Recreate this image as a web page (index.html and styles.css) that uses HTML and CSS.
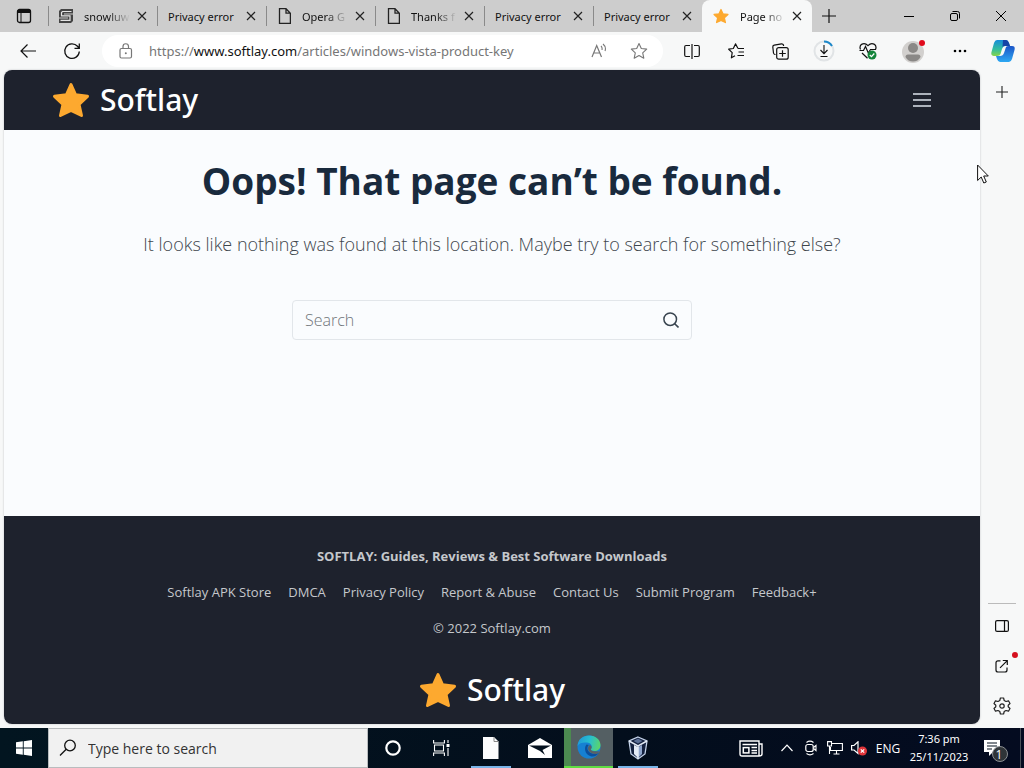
FILE: index.html
```html
<!DOCTYPE html>
<html lang="en">
<head>
    <meta charset="UTF-8">
    <meta name="viewport" content="width=device-width, initial-scale=1.0">
    <title>Page not found - Softlay</title>
    <link rel="stylesheet" href="styles.css">
</head>
<body>
    <svg class="defs" aria-hidden="true">
        <symbol id="star" viewBox="0 0 38 36">
            <path d="M19 2.500L23.600 12.800L35.500 14.300L27 22.300L29.500 33.500L19 28.300L8.500 33.500L11 22.300L2.500 14.300L14.400 12.800Z" fill="#fda92f" stroke="#fda92f" stroke-width="3" stroke-linejoin="round"/>
        </symbol>
        <symbol id="close" viewBox="0 0 10 10">
            <path d="M1 1L9 9M9 1L1 9" fill="none" stroke="#222" stroke-width="1.200"/>
        </symbol>
        <symbol id="file" viewBox="0 0 14 16">
            <path d="M2.500 .7H9L13.400 5.200V15.300H2.500ZM9 .7V5.200H13.400" fill="none" stroke="#222" stroke-width="1.300"/>
        </symbol>
    </svg>

    <div class="tabs">
        <button class="tab-menu" aria-label="Tab actions">
            <svg width="16" height="16" viewBox="0 0 16 16"><rect x="1.500" y="1.500" width="13" height="13" rx="2" fill="none" stroke="#111" stroke-width="1.300"/><path d="M1.500 2H14.500V5H1.500Z" fill="#111"/><path d="M5 5V14" stroke="#111"/></svg>
        </button>
        <div class="tab">
            <svg width="14" height="14" viewBox="0 0 14 14"><path d="M2 0H14V4.500H5V5.500H14V12L12 14H0V9.500H9V8.500H0V2Z" fill="#444"/><path d="M12.500 2.500H3.500L2.500 3.500V6.800H11V11.300H1.500" fill="none" stroke="#e4e4e4" stroke-width="1.200"/></svg>
            <span class="tab-title">snowluw</span>
            <button class="tab-close" aria-label="Close tab"><svg width="10" height="10"><use href="#close"/></svg></button>
        </div>
        <div class="tab">
            <span class="tab-title full">Privacy error</span>
            <button class="tab-close" aria-label="Close tab"><svg width="10" height="10"><use href="#close"/></svg></button>
        </div>
        <div class="tab">
            <svg width="14" height="16"><use href="#file"/></svg>
            <span class="tab-title">Opera G</span>
            <button class="tab-close" aria-label="Close tab"><svg width="10" height="10"><use href="#close"/></svg></button>
        </div>
        <div class="tab">
            <svg width="14" height="16"><use href="#file"/></svg>
            <span class="tab-title">Thanks f</span>
            <button class="tab-close" aria-label="Close tab"><svg width="10" height="10"><use href="#close"/></svg></button>
        </div>
        <div class="tab">
            <span class="tab-title full">Privacy error</span>
            <button class="tab-close" aria-label="Close tab"><svg width="10" height="10"><use href="#close"/></svg></button>
        </div>
        <div class="tab">
            <span class="tab-title full">Privacy error</span>
            <button class="tab-close" aria-label="Close tab"><svg width="10" height="10"><use href="#close"/></svg></button>
        </div>
        <div class="tab active">
            <svg width="16" height="16"><use href="#star"/></svg>
            <span class="tab-title">Page no</span>
            <button class="tab-close" aria-label="Close tab"><svg width="10" height="10"><use href="#close"/></svg></button>
        </div>
        <button class="new-tab" aria-label="New tab">
            <svg width="14" height="14" viewBox="0 0 14 14"><path d="M7 0V14M0 7H14" stroke="#111" stroke-width="1.200"/></svg>
        </button>
        <div class="window-buttons">
            <button aria-label="Minimize"><svg width="10" height="10" viewBox="0 0 10 10"><path d="M0 5.500H10" stroke="#000"/></svg></button>
            <button aria-label="Restore"><svg width="10" height="10" viewBox="0 0 10 10"><path d="M2.500 .5H7.500Q9.500 .5 9.500 2.500V7.500" fill="none" stroke="#000"/><rect x=".5" y="2.500" width="7" height="7" rx="1.500" fill="none" stroke="#000"/></svg></button>
            <button aria-label="Close window"><svg width="10" height="10" viewBox="0 0 10 10"><path d="M0 0L10 10M10 0L0 10" stroke="#000"/></svg></button>
        </div>
    </div>

    <div class="toolbar">
        <button aria-label="Back">
            <svg width="16" height="14" viewBox="0 0 16 14"><path d="M16 7H1M7.500 .5L1 7L7.500 13.500" fill="none" stroke="#111" stroke-width="1.200"/></svg>
        </button>
        <button aria-label="Refresh">
            <svg width="18" height="18" viewBox="0 0 18 18"><path d="M16.300 9.500A7.300 7.300 0 1 1 14.500 4.300L16 6M16.300 1.500V6.300H11.500" fill="none" stroke="#111" stroke-width="1.300"/></svg>
        </button>
        <div class="address">
            <svg width="14" height="16" viewBox="0 0 14 16"><rect x="1" y="5.500" width="11.500" height="9.500" rx="1.500" fill="none" stroke="#777" stroke-width="1.200"/><path d="M4 5.500V3.500A2.700 2.700 0 0 1 9.500 3.500V5.500" fill="none" stroke="#777" stroke-width="1.200"/><circle cx="6.800" cy="10.300" r="1" fill="#777"/></svg>
            <div class="url">https://<b>www.softlay.com</b>/articles/windows-vista-product-key</div>
            <button aria-label="Read aloud">
                <svg width="16" height="16" viewBox="0 0 16 16"><path d="M1 14L5.700 2.500L10.500 14M2.700 10H8.800" fill="none" stroke="#777" stroke-width="1.200"/><path d="M10 3Q11.500 4.500 11 7M12 1Q15.500 4 14 8" fill="none" stroke="#777" stroke-width="1.100"/></svg>
            </button>
            <button aria-label="Add to favorites">
                <svg width="18" height="18" viewBox="0 0 18 18"><path d="M9 1.500L11.300 6.500L16.700 7.100L12.700 10.800L13.800 16.200L9 13.500L4.200 16.200L5.300 10.800L1.300 7.100L6.700 6.500Z" fill="none" stroke="#777" stroke-width="1.100" stroke-linejoin="round"/></svg>
            </button>
        </div>
        <div class="tools">
            <button aria-label="Split screen">
                <svg width="16" height="16" viewBox="0 0 16 16"><path d="M6 2.500H2Q.7 2.500 .7 4V12Q.7 13.500 2 13.500H6M10 2.500H14Q15.300 2.500 15.300 4V12Q15.300 13.500 14 13.500H10M8 1V16" fill="none" stroke="#111" stroke-width="1.200"/></svg>
            </button>
            <button aria-label="Favorites">
                <svg width="17" height="16" viewBox="0 0 17 16"><path d="M10 5.500L7.500 .9L5.300 5.500L.7 6.200L4.200 9.600L3.400 14.800L7 12.800M10 5.500H16M10.500 9H16M9.500 12.500H16" fill="none" stroke="#111" stroke-width="1.200" stroke-linejoin="round"/></svg>
            </button>
            <button aria-label="Collections">
                <svg width="17" height="17" viewBox="0 0 17 17"><path d="M3.500 11.500H3Q1.700 11.300 1.500 10L.8 4Q.7 2.500 2.200 2.200L9.500 .8Q11 .7 11.500 2V3" fill="none" stroke="#111" stroke-width="1.200"/><rect x="4.700" y="4.700" width="11.500" height="11.500" rx="2" fill="none" stroke="#111" stroke-width="1.200"/><path d="M10.500 7.200V13.700M7.200 10.500H13.800" stroke="#111" stroke-width="1.200"/></svg>
            </button>
            <button aria-label="Downloads">
                <svg width="22" height="22" viewBox="0 0 22 22"><circle cx="11" cy="11" r="9.500" fill="none" stroke="#e1e4e6" stroke-width="2"/><path d="M11 1.500A9.500 9.500 0 0 1 19 6" fill="none" stroke="#1b87c9" stroke-width="2"/><path d="M11 5V13.500M7.500 10L11 13.700L14.500 10M7.500 16.500H14.500" fill="none" stroke="#111" stroke-width="1.100"/></svg>
            </button>
            <button aria-label="Browser essentials">
                <svg width="18" height="18" viewBox="0 0 18 18"><path d="M1.500 7.500C-.5 2.500 5-.5 9 3.700C13-.5 18.500 2.500 16.500 7.500M.5 8.500H4.500L6.500 4.500L9.300 11L11.500 7.500H17M3 11L8.500 16.200" fill="none" stroke="#111" stroke-width="1.200"/><circle cx="13" cy="13" r="4.500" fill="#14853a"/><path d="M10.800 13L12.500 14.700L15.300 11.500" fill="none" stroke="#fff" stroke-width="1.200"/></svg>
            </button>
            <button class="profile" aria-label="Profile">
                <svg width="24" height="24" viewBox="0 0 24 24"><circle cx="11" cy="13" r="11" fill="#d2d0ce"/><circle cx="11" cy="9" r="5" fill="#8a8886"/><path d="M3.500 18Q3.500 15.500 6 15.500H16Q18.500 15.500 18.500 18Q16 22.500 11 22.500Q6 22.500 3.500 18Z" fill="#8a8886"/><circle cx="20" cy="4" r="3" fill="#e00b1c"/></svg>
            </button>
            <button aria-label="Settings and more">
                <svg width="14" height="4" viewBox="0 0 14 4"><circle cx="2" cy="2" r="1.300"/><circle cx="7" cy="2" r="1.300"/><circle cx="12" cy="2" r="1.300"/></svg>
            </button>
            <button class="copilot" aria-label="Copilot">
                <svg width="24" height="24" viewBox="0 0 24 24">
                    <defs>
                        <linearGradient id="cpa" x1="0" y1="0" x2="0" y2="1"><stop offset="0" stop-color="#168ddb"/><stop offset=".6" stop-color="#35bf9b"/><stop offset="1" stop-color="#86d44b"/></linearGradient>
                        <linearGradient id="cpb" x1="0" y1="0" x2="0" y2="1"><stop offset="0" stop-color="#1b55c8"/><stop offset="1" stop-color="#2da8f2"/></linearGradient>
                    </defs>
                    <path d="M6 1H15Q17 1 18 4L19 7H14Q12 7 11 10L9.500 15Q9 17 6 17H3Q-.5 17 .5 13L3 4Q4 1 6 1Z" fill="url(#cpa)"/>
                    <path d="M12 1H15Q17 1 18 4L19 7H14Q12 7 11.500 8Z" fill="#1645a7"/>
                    <path d="M18 23H9Q7 23 6 20L5 17H9Q12 17 13 14L15 8Q15.500 7 18 7H21Q24.500 7 23.500 11L21 20Q20 23 18 23Z" fill="url(#cpb)"/>
                </svg>
            </button>
        </div>
    </div>

    <div class="main">
        <div class="page">
            <header class="site-header">
                <a class="logo" href="#"><svg width="38" height="36"><use href="#star"/></svg>Softlay</a>
                <button class="menu" aria-label="Menu"><svg width="18" height="14" viewBox="0 0 18 14"><path d="M0 1H18M0 7H18M0 13H18" stroke="#dde3ec" stroke-width="1.700"/></svg></button>
            </header>
            <section class="not-found">
                <h1>Oops! That page can’t be found.</h1>
                <p>It looks like nothing was found at this location. Maybe try to search for something else?</p>
                <form class="search">
                    <input type="search" placeholder="Search" aria-label="Search">
                    <button type="button" aria-label="Search button"><svg width="16" height="16" viewBox="0 0 16 16"><circle cx="7.200" cy="7.200" r="6.300" fill="none" stroke="#38444f" stroke-width="1.500"/><path d="M11.700 11.700L15.500 15.500" stroke="#38444f" stroke-width="1.600"/></svg></button>
                </form>
            </section>
            <footer class="site-footer">
                <strong>SOFTLAY: Guides, Reviews &amp; Best Software Downloads</strong>
                <nav>
                    <a href="#">Softlay APK Store</a>
                    <a href="#">DMCA</a>
                    <a href="#">Privacy Policy</a>
                    <a href="#">Report &amp; Abuse</a>
                    <a href="#">Contact Us</a>
                    <a href="#">Submit Program</a>
                    <a href="#">Feedback+</a>
                </nav>
                <span>© 2022 Softlay.com</span>
                <a class="logo" href="#"><svg width="38" height="36"><use href="#star"/></svg>Softlay</a>
            </footer>
        </div>
        <aside class="sidebar">
            <button aria-label="Customize sidebar"><svg width="12" height="12" viewBox="0 0 12 12"><path d="M6 0V12M0 6H12" stroke="#222" stroke-width="1.100"/></svg></button>
            <div class="sidebar-bottom">
                <button aria-label="Hide sidebar"><svg width="14" height="12" viewBox="0 0 14 12"><rect x=".6" y=".6" width="12.800" height="10.800" rx="1.500" fill="none" stroke="#111" stroke-width="1.200"/><path d="M9.500 1V11" stroke="#111" stroke-width="1.200"/></svg></button>
                <button class="open-link" aria-label="Open link"><svg width="14" height="14" viewBox="0 0 14 14"><path d="M5.500 1.800H3Q1 1.800 1 3.800V11Q1 13 3 13H10Q12 13 12 11V8.500M5 8.800L12 1.800M7.800 1.500H12.300V6" fill="none" stroke="#111" stroke-width="1.200"/></svg><span class="dot"></span></button>
                <button aria-label="Settings"><svg width="18" height="18" viewBox="0 0 18 18"><path d="M7.400 1H10.600L11.200 3.500L13 4.500L15.500 3.800L17 6.500L15.200 8.200V9.800L17 11.500L15.500 14.200L13 13.500L11.200 14.500L10.600 17H7.400L6.800 14.500L5 13.500L2.500 14.200L1 11.500L2.800 9.800V8.200L1 6.500L2.500 3.800L5 4.500L6.800 3.500Z" fill="none" stroke="#222" stroke-width="1.200" stroke-linejoin="round"/><circle cx="9" cy="9" r="2.200" fill="none" stroke="#222" stroke-width="1.200"/></svg></button>
            </div>
        </aside>
    </div>

    <div class="taskbar">
        <button class="start" aria-label="Start"><svg width="16" height="16" viewBox="0 0 16 16"><path d="M0 2.200L6.800 1.300V7.500H0ZM7.700 1.200L16 0V7.500H7.700ZM0 8.400H6.800V14.700L0 13.800ZM7.700 8.400H16V16L7.700 14.800Z" fill="#fff"/></svg></button>
        <label class="task-search">
            <svg width="18" height="18" viewBox="0 0 18 18"><circle cx="11" cy="6.500" r="5.300" fill="none" stroke="#111" stroke-width="1.300"/><path d="M7.200 10.200L1 16.500" stroke="#111" stroke-width="1.300"/></svg>
            <input type="text" placeholder="Type here to search" aria-label="Type here to search">
        </label>
        <button class="app" aria-label="Cortana"><svg width="16" height="16" viewBox="0 0 16 16"><circle cx="8" cy="8" r="6.700" fill="none" stroke="#fff" stroke-width="2.200"/></svg></button>
        <button class="app" aria-label="Task view"><svg width="17" height="16" viewBox="0 0 17 16"><path d="M.6 0V3H11.400V0M.6 16V13H11.400V16M1.500 5H10.500V11H1.500ZM15 0V3M15 8V16" fill="none" stroke="#fff" stroke-width="1.100"/><path d="M13.500 4H16.500V7H13.500Z" fill="#fff"/></svg></button>
        <button class="app open" aria-label="Document"><svg width="16" height="22" viewBox="0 0 16 22"><path d="M0 0H11L15.500 4.500V22H0Z" fill="#fbfcfd"/><path d="M11 0V4.500H15.500" fill="none" stroke="#888"/></svg></button>
        <button class="app" aria-label="Mail"><svg width="24" height="20" viewBox="0 0 24 20"><path d="M0 7L12 0L24 7V20H0Z" fill="#fff"/><path d="M1 7.500L12 13L17 17L14.500 12L23 7.500Z" fill="#04111e"/></svg></button>
        <button class="app edge" aria-label="Microsoft Edge">
            <svg width="24" height="24" viewBox="0 0 24 24">
                <defs><linearGradient id="eg" x1="0" y1=".3" x2="1" y2=".5"><stop offset="0" stop-color="#2098d8"/><stop offset=".5" stop-color="#27bfd0"/><stop offset="1" stop-color="#5bd46b"/></linearGradient></defs>
                <circle cx="12" cy="12" r="11.500" fill="#1681d3"/>
                <path d="M.5 11C1 4 6 .5 12 .5C19 .5 23.500 5 23.500 10C23.500 14 20.500 16 17.500 16C15 16 13.500 15 14 14C16 11 14 8 10 7.500C6 7 2 8 .5 11Z" fill="url(#eg)"/>
                <path d="M9.500 9.500C7 12 7.500 19 13 21C17 22.500 20 20.500 22 18C17 20 11 18 10.500 14C10.200 12 11 10.500 12 10Z" fill="#0c4f9d"/>
                <path d="M14 14C13.200 15 15 16.300 18 16.200L22.500 16.500L21 18.500C16 20 11 17 11 13.500C11 11.500 12 10.500 13 10C15 11 15 13 14 14Z" fill="#5a6165"/>
            </svg>
        </button>
        <button class="app open" aria-label="VirtualBox"><svg width="20" height="24" viewBox="0 0 20 24"><path d="M10 1L19 5L17 18L10 23L3 18L1 5Z" fill="#14213f" stroke="#c5d3ea" stroke-width="1.300"/><path d="M10 11L14 9V18L10 22Z" fill="#8fa5cc"/><path d="M10 11L6 9V18L10 22Z" fill="#e4ebf6"/><path d="M1 5L10 10L19 5M10 10V23" fill="none" stroke="#e4ebf6" stroke-width="1.500"/><path d="M10 2.500L14.500 5L10 7.500L5.500 5Z" fill="#5b6f96"/></svg></button>
        <div class="tray">
            <button class="news" aria-label="News"><svg width="24" height="17" viewBox="0 0 24 17"><path d="M1 1H20V16H3Q1 16 1 14ZM20 4H23V14Q23 16 20 16" fill="none" stroke="#fff" stroke-width="1.400"/><path d="M3.500 4.500H18M12.500 7.500H18M12.500 10.500H18M12.500 13H18" stroke="#fff" stroke-width="1.400"/><rect x="4.300" y="7.600" width="5.600" height="5.300" fill="none" stroke="#fff" stroke-width="1.500"/></svg></button>
            <button aria-label="Show hidden icons"><svg width="12" height="8" viewBox="0 0 12 8"><path d="M.5 7L6 1.200L11.500 7" fill="none" stroke="#fff" stroke-width="1.200"/></svg></button>
            <button aria-label="Meet now"><svg width="12" height="16" viewBox="0 0 12 16"><rect x=".8" y="4.500" width="7.400" height="7" rx="2" fill="none" stroke="#fff" stroke-width="1.200"/><path d="M8.500 7.500L11 5.500V10.500L8.500 8.500M1.500 2.500Q5 -.2 8.500 2.500M1.500 13.500Q5 16.200 8.500 13.500" fill="none" stroke="#fff" stroke-width="1.100"/></svg></button>
            <button aria-label="Network"><svg width="16" height="14" viewBox="0 0 16 14"><path d="M5 2.500H15.400V9.500H3.500V6M9.500 9.500V13M6.500 13H12.500M.6 .6H4.500V5H.6ZM2.500 5V13" fill="none" stroke="#fff" stroke-width="1.100"/></svg></button>
            <button aria-label="Volume"><svg width="16" height="15" viewBox="0 0 16 15"><path d="M.6 4.500H3L7 .8V12.500L3 9H.6Z" fill="none" stroke="#fff" stroke-width="1.200"/><circle cx="11.500" cy="10" r="4.500" fill="#e0353a"/><path d="M9.800 8.300L13.200 11.700M13.200 8.300L9.800 11.700" stroke="#fff" stroke-width="1.200"/></svg></button>
            <span class="lang">ENG</span>
            <div class="clock">7:36 pm<br>25/11/2023</div>
            <button class="notify" aria-label="Notifications"><svg width="28" height="28" viewBox="0 0 28 28"><path d="M1 6H17V18H10L6 22V18H1Z" fill="#fff"/><path d="M4 9H14M4 12H14M4 15H9" stroke="#04111e" stroke-width="1.200"/><circle cx="17" cy="20" r="7.500" fill="#2f3438" stroke="#8b8f93"/></svg><span class="count">1</span></button>
        </div>
    </div>

    <svg class="cursor" width="12" height="20" viewBox="0 0 12 20"><path d="M.6 1V16.500L4.200 13L6.800 19L9.300 18L6.700 12H11.300Z" fill="#fff" stroke="#111"/></svg>
</body>
</html>
```
FILE: styles.css
```css
* {
    box-sizing: border-box;
}
body {
    margin: 0;
    min-height: 100vh;
    display: flex;
    flex-direction: column;
    position: relative;
    background: #f7f8f8;
    font-family: "Open Sans", "Noto Sans", sans-serif;
    font-size: 13px;
    color: #111;
}
button {
    display: flex;
    align-items: center;
    justify-content: center;
    padding: 0;
    border: 0;
    background: none;
    color: inherit;
    font: inherit;
}
svg {
    flex: none;
}
a {
    color: inherit;
    text-decoration: none;
}
.defs {
    position: absolute;
    width: 0;
    height: 0;
}

/* tab strip */
.tabs {
    display: flex;
    height: 32px;
    background: #cdcdcd;
}
.tab-menu {
    width: 48px;
}
.tab {
    display: flex;
    align-items: center;
    width: 109px;
    padding: 0 9px 0 11px;
    background: linear-gradient(#8a8a8a, #8a8a8a) 0 50% / 1px 20px no-repeat;
    font-family: "Noto Sans", sans-serif;
    font-size: 11px;
}
.tab > svg {
    margin-right: 11px;
}
.tab-title {
    flex: 1;
    white-space: nowrap;
    mask-image: linear-gradient(to right, #000 24px, transparent 46px);
}
.tab-title.full {
    mask-image: none;
}
.tab-close {
    width: 12px;
    height: 20px;
}
.tab.active {
    width: 110px;
    background: #f7f8f8;
    border-radius: 8px 8px 0 0;
}
.new-tab {
    width: 34px;
}
.window-buttons {
    display: flex;
    margin-left: auto;
}
.window-buttons button {
    width: 46px;
}

/* toolbar */
.toolbar {
    display: flex;
    align-items: center;
    height: 38px;
    padding-left: 6px;
}
.toolbar button {
    width: 44px;
    height: 32px;
}
.address {
    flex: 1;
    display: flex;
    align-items: center;
    gap: 16px;
    height: 32px;
    margin: 0 7px 0 8px;
    padding: 0 4px 0 17px;
    border-radius: 16px;
    background: #fff;
}
.toolbar .address button {
    width: 40px;
    margin-left: -16px;
}
.address .url {
    margin-right: auto;
    color: #767676;
    font-family: "Noto Sans", sans-serif;
    font-size: 13px;
    white-space: nowrap;
}
.address .url b {
    color: #111;
    font-weight: 400;
}
.tools {
    display: flex;
}
.toolbar .profile {
    width: 48px;
}
.toolbar .copilot {
    width: 42px;
}

/* web page + sidebar */
.main {
    flex: 1;
    display: flex;
    padding-left: 4px;
}
.page {
    flex: 1;
    display: flex;
    flex-direction: column;
    overflow: hidden;
    margin-bottom: 4px;
    border-radius: 8px;
    background: #fafcfe;
    box-shadow: 0 0 2px #b5b8bc;
}
.site-header {
    display: flex;
    align-items: center;
    justify-content: space-between;
    height: 60px;
    padding: 0 49px 0 48px;
    background: #1e222d;
}
.logo {
    display: flex;
    align-items: center;
    gap: 10px;
    color: #fff;
    font-family: "Noto Sans", sans-serif;
    font-size: 30px;
    font-weight: 500;
    line-height: 40px;
}
.menu {
    width: 18px;
}
.not-found {
    flex: 1;
    padding: 21px 20px 0;
    text-align: center;
}
.not-found h1 {
    margin: 0;
    color: #192a3d;
    font-size: 37px;
    line-height: 60px;
}
.not-found p {
    margin: 18px 0 41px;
    color: #3e464d;
    font-size: 18px;
    font-weight: 300;
    line-height: 30px;
}
.search {
    display: flex;
    width: 400px;
    max-width: 100%;
    height: 40px;
    margin: 0 auto;
    border: 1px solid #e2e6ea;
    border-radius: 4px;
}
.search input {
    flex: 1;
    min-width: 0;
    padding: 0 12px;
    border: 0;
    outline: 0;
    background: none;
    font: inherit;
    font-size: 16px;
    font-weight: 300;
}
.search input::placeholder {
    color: #70757a;
}
.search button {
    width: 40px;
}
.site-footer {
    display: flex;
    flex-direction: column;
    align-items: center;
    gap: 16px;
    padding: 30px 20px 14px;
    background: #1e222d;
    color: #c5c8cc;
    line-height: 20px;
}
.site-footer nav {
    display: flex;
    flex-wrap: wrap;
    justify-content: center;
    gap: 17px;
}
.site-footer .logo {
    margin-top: 16px;
}
.sidebar {
    display: flex;
    flex-direction: column;
    justify-content: space-between;
    width: 44px;
    padding: 2px 0;
}
.sidebar button {
    position: relative;
    width: 100%;
    height: 40px;
}
.sidebar-bottom::before {
    content: "";
    display: block;
    width: 28px;
    height: 1px;
    margin: 0 auto 2px;
    background: #bbb;
}
.dot {
    position: absolute;
    top: 6px;
    right: 6px;
    width: 6px;
    height: 6px;
    border-radius: 50%;
    background: #d5101e;
}

/* taskbar */
.taskbar {
    display: flex;
    height: 40px;
    background: linear-gradient(to right, #021520, #030e1c 60%, #040b20);
    color: #fff;
}
.start {
    width: 48px;
}
.task-search {
    display: flex;
    align-items: center;
    gap: 11px;
    width: 320px;
    padding: 0 10px;
    border: 1px solid #b9bcbe;
    background: #f1f1f1;
}
.task-search input {
    flex: 1;
    min-width: 0;
    padding: 0;
    border: 0;
    outline: 0;
    background: none;
    font: inherit;
    font-size: 14px;
}
.task-search input::placeholder {
    color: #333;
}
.app {
    width: 49px;
}
.app.open {
    background: linear-gradient(#79b4e8, #79b4e8) 50% 100% / 40px 2px no-repeat;
}
.app.edge {
    background: linear-gradient(to right, #4c8a50 7px, #545f63 7px);
    border-bottom: 2px solid #5fdd42;
}
.tray {
    display: flex;
    align-items: center;
    margin-left: auto;
    font-size: 12px;
}
.tray button {
    width: 24px;
    height: 40px;
}
.tray .news {
    width: 48px;
}
.lang {
    width: 34px;
    text-align: center;
}
.clock {
    width: 68px;
    font-family: "Noto Sans", sans-serif;
    font-size: 11px;
    line-height: 18px;
    text-align: center;
}
.tray .notify {
    position: relative;
    width: 48px;
    border-right: 1px solid #4a5058;
    margin-right: 3px;
}
.count {
    position: absolute;
    top: 18px;
    left: 22px;
    width: 8px;
}
.cursor {
    position: absolute;
    top: 164px;
    left: 977px;
}
```
